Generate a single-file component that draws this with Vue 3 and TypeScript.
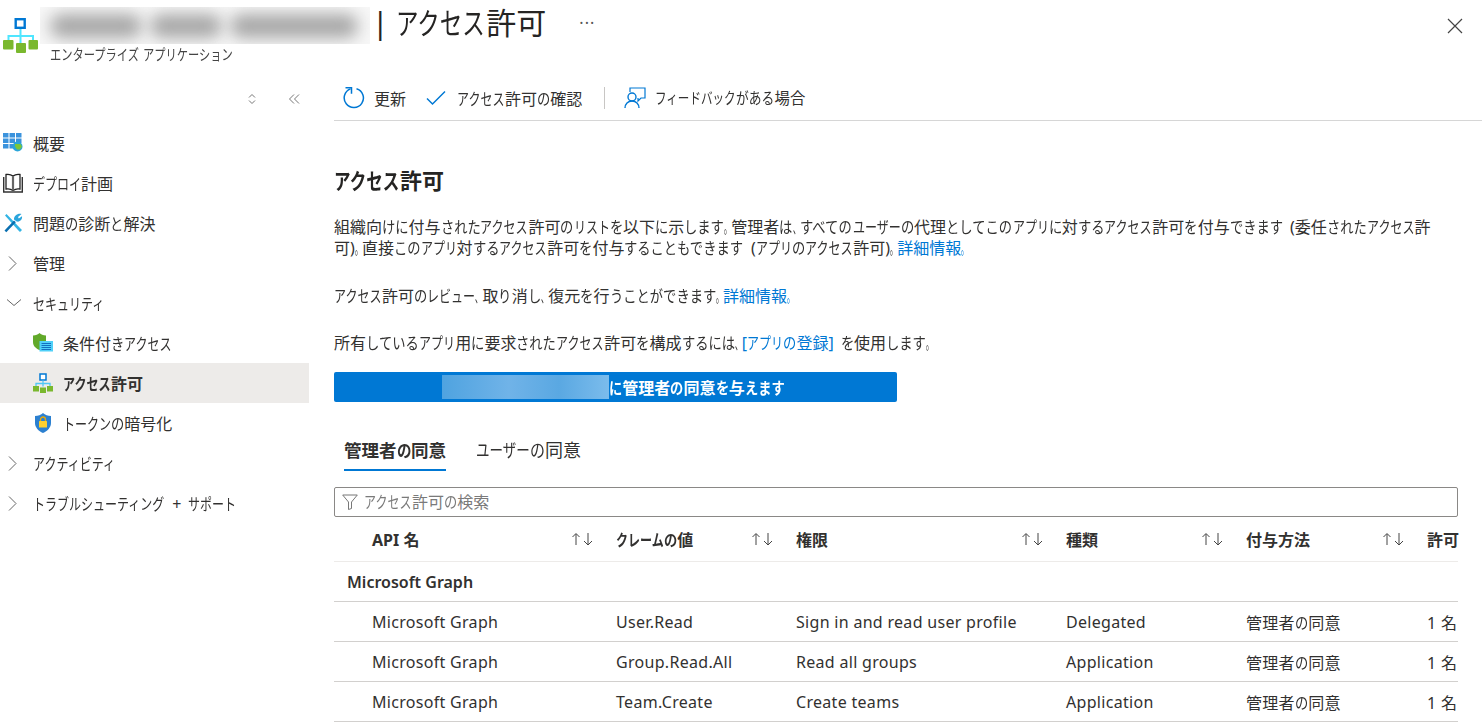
<script setup lang="ts">
import { h } from 'vue'
import type { FunctionalComponent } from 'vue'

const kindOf = (ch: string): string | null => {
  if (/[\u30a0-\u30ff]/.test(ch)) return 'kata'
  if (/[\u3041-\u309f]/.test(ch)) return 'hira'
  if (/[\u3001\u3002]/.test(ch)) return 'punct'
  return null
}
const advance: Record<string, number> = { kata: 0.75, hira: 0.83, punct: 0.45 }
const T: FunctionalComponent<{ s: string }> = (props) =>
  (props.s.match(/[\u30a0-\u30ff]+|[\u3041-\u309f]+|[\u3001\u3002]+|[^\u3001\u3002\u3041-\u30ff]+/g) ?? []).map((run) => {
    const kind = kindOf(run[0])
    return kind
      ? h('span', { class: kind, style: { width: `${run.length * advance[kind]}em` } }, run)
      : run
  })
T.props = ['s']

interface NavItem { label: string; icon: string; child?: boolean; active?: boolean }
const nav: NavItem[] = [
  { label: '概要', icon: 'grid' },
  { label: 'デプロイ計画', icon: 'book' },
  { label: '問題の診断と解決', icon: 'wrench' },
  { label: '管理', icon: 'right' },
  { label: 'セキュリティ', icon: 'down' },
  { label: '条件付きアクセス', icon: 'policy', child: true },
  { label: 'アクセス許可', icon: 'tree', child: true, active: true },
  { label: 'トークンの暗号化', icon: 'shield', child: true },
  { label: 'アクティビティ', icon: 'right' },
  { label: 'トラブルシューティング + サポート', icon: 'right' },
]
const columns = ['API 名', 'クレームの値', '権限', '種類', '付与方法']
const rows = [
  ['Microsoft Graph', 'User.Read', 'Sign in and read user profile', 'Delegated', '管理者の同意', '1 名'],
  ['Microsoft Graph', 'Group.Read.All', 'Read all groups', 'Application', '管理者の同意', '1 名'],
  ['Microsoft Graph', 'Team.Create', 'Create teams', 'Application', '管理者の同意', '1 名'],
]
</script>

<template>
  <div class="page">
    <header class="top">
      <svg class="logo" viewBox="0 0 36 38" width="36" height="38">
        <rect x="13.700" y="3.200" width="9" height="8.600" fill="#fff" stroke="#0078d4" stroke-width="2.400" />
        <path d="M18.500 13v15M6.500 24v-4h24.500v4" fill="none" stroke="#50e6ff" stroke-width="2" />
        <rect x="1" y="24" width="10.500" height="9.500" rx="1" fill="#7ab82e" />
        <rect x="14" y="27" width="10" height="10" rx="1" fill="#7ab82e" />
        <rect x="26.500" y="24" width="9.500" height="9.500" rx="1" fill="#7ab82e" />
      </svg>
      <div class="titles">
        <div class="title-row">
          <div class="blur-name" aria-hidden="true">
            <span class="blob b1"></span><span class="blob b2"></span><span class="blob b3"></span>
          </div>
          <h1>| <T s="アクセス許可" /></h1>
          <span class="more">···</span>
        </div>
        <div class="subtitle"><T s="エンタープライズ アプリケーション" /></div>
      </div>
      <svg class="close" viewBox="0 0 16 16" width="16" height="16">
        <path d="M1 1l14 14M15 1L1 15" stroke="#444" stroke-width="1.200" fill="none" />
      </svg>
    </header>

    <div class="body">
      <aside class="side">
        <div class="side-tools">
          <svg viewBox="0 0 10 12" width="10" height="12">
            <path d="M2 4.500L5 1.500l3 3M2 7.500l3 3 3-3" fill="none" stroke="#777" stroke-width="1" />
          </svg>
          <svg viewBox="0 0 12 12" width="12" height="12">
            <path d="M6 1.500L1.500 6 6 10.500M11 1.500L6.500 6 11 10.500" fill="none" stroke="#777" stroke-width="1" />
          </svg>
        </div>
        <nav>
          <div v-for="item in nav" :key="item.label" class="nav-item" :class="{ child: item.child, active: item.active }">
            <span class="nav-icon">
              <svg v-if="item.icon === 'grid'" viewBox="0 0 20 20" width="20" height="20">
                <path d="M0 0h5.500v4.500H0zM6.500 0H12v4.500H6.500zM13 0h5.500v4.500H13zM0 5.500h5.500V10H0zM6.500 5.500H12V10H6.500zM13 5.500h5.500V10H13zM0 11h5.500v4.500H0zM6.500 11H12v4.500H6.500z" fill="#3b93dd" />
                <circle cx="14.500" cy="13.500" r="5" fill="#2aa5d9" />
                <path d="M12 11h5.500l1.500 2.500-2 3h-3l-2-3z" fill="#7cc63a" />
              </svg>
              <svg v-else-if="item.icon === 'book'" viewBox="0 0 20 20" width="20" height="20">
                <path d="M3 1.500c2.500-.5 5 0 7 1.500 2-1.500 4.500-2 7-1.500V16c-2.500-.5-5 0-7 1.500-2-1.500-4.500-2-7-1.500z" fill="#fff" stroke="#222" stroke-width="1.300" />
                <path d="M10 3v14.500" stroke="#666" stroke-width="2.200" />
                <path d="M.7 4v15h18.600V4" fill="none" stroke="#333" stroke-width="1.400" />
              </svg>
              <svg v-else-if="item.icon === 'wrench'" viewBox="0 0 20 20" width="20" height="20">
                <path d="M3.500 1L2 2.500l12.500 14 2.500 2.500 2-2-2.500-2.500z" fill="#32b4e4" />
                <path d="M1.500 17.500L11 7.500l1.800 1.800-9.500 10z" fill="#0a6fb0" />
                <path d="M18.500 1l-3.500 3 .8 1.500 3.200-2.200c.6 3-2 6-5.300 5.200L11 6.500C10.800 3 14.500 0 18.500 1z" fill="#2aa5dc" />
              </svg>
              <svg v-else-if="item.icon === 'right'" class="chev" viewBox="0 0 15 15" width="15" height="15">
                <path d="M2 .5l7 7-7 7" fill="none" stroke="#666" stroke-width="1" />
              </svg>
              <svg v-else-if="item.icon === 'down'" class="chev" viewBox="0 0 15 15" width="15" height="15">
                <path d="M0 3.500l7 6 7-6" fill="none" stroke="#666" stroke-width="1" />
              </svg>
              <svg v-else-if="item.icon === 'policy'" viewBox="0 0 20 20" width="20" height="20">
                <path d="M0 2.500C3 2.500 5 1.500 6.500 0 8 1.500 10 2.500 13 2.500V9c0 4-3 6.500-6.500 8C3 15.500 0 13 0 9z" fill="#62a92a" />
                <rect x="6.500" y="8" width="13.500" height="10.500" fill="#50d0f8" />
                <path d="M8.500 10.500h9.500M8.500 12.500h9.500M8.500 14.500h9.500M8.500 16.500h9.500" stroke="#1470c0" stroke-width="1" />
              </svg>
              <svg v-else-if="item.icon === 'tree'" viewBox="0 0 20 20" width="20" height="20">
                <rect x="7" y="1" width="6" height="6" fill="#fff" stroke="#0078d4" stroke-width="1.500" />
                <path d="M10 7.500v6M3 13v-2.500h14V13" fill="none" stroke="#50c8f4" stroke-width="1.300" />
                <rect x="0" y="13" width="6" height="5.500" fill="#7ab82e" />
                <rect x="7" y="14.500" width="6" height="5.500" fill="#7ab82e" />
                <rect x="14" y="13" width="6" height="5.500" fill="#7ab82e" />
              </svg>
              <svg v-else-if="item.icon === 'shield'" viewBox="0 0 20 20" width="20" height="20">
                <path d="M2 3c3 0 6-1 8-3 2 2 5 3 8 3v7c0 4.500-3.500 8-8 10-4.500-2-8-5.500-8-10z" fill="#2c80d0" />
                <rect x="6" y="8" width="8" height="6.500" rx=".5" fill="#ffd02f" />
                <path d="M7.500 8V6.500a2.500 2.500 0 015 0V8" fill="none" stroke="#e8a80c" stroke-width="1.300" />
              </svg>
            </span>
            <span class="nav-label"><T :s="item.label" /></span>
          </div>
        </nav>
      </aside>

      <main class="main">
        <div class="toolbar">
          <button class="tool refresh">
            <svg viewBox="0 0 22 24" width="22" height="24">
              <path d="M13.500 2.700a9.600 9.600 0 11-6 .2" fill="none" stroke="#0078d4" stroke-width="1.500" />
              <path d="M2.500 1.700h6v6" fill="none" stroke="#0078d4" stroke-width="1.500" />
            </svg>
            <span><T s="更新" /></span>
          </button>
          <button class="tool check">
            <svg viewBox="0 0 20 16" width="20" height="16">
              <path d="M1 8.500l5.500 5.500L19 1.500" fill="none" stroke="#0078d4" stroke-width="1.500" />
            </svg>
            <span><T s="アクセス許可の確認" /></span>
          </button>
          <span class="divider"></span>
          <button class="tool fb">
            <svg viewBox="0 0 22 22" width="22" height="22">
              <circle cx="8" cy="10" r="4" fill="none" stroke="#0078d4" stroke-width="1.400" />
              <path d="M1 21c0-4 3-7 7-7s7 3 7 7" fill="none" stroke="#0078d4" stroke-width="1.400" />
              <path d="M6 5V1h15v10h-4l-3 3v-3" fill="none" stroke="#0078d4" stroke-width="1.200" />
            </svg>
            <span class="fb-text"><T s="フィードバックがある場合" /></span>
          </button>
        </div>

        <section class="content">
          <h2><T s="アクセス許可" /></h2>
          <p class="p1"><T s="組織向けに付与されたアクセス許可のリストを以下に示します。管理者は、すべてのユーザーの代理としてこのアプリに対するアクセス許可を付与できます (委任されたアクセス許" /><br /><T s="可)。直接このアプリ対するアクセス許可を付与することもできます (アプリのアクセス許可)。" /><a><T s="詳細情報。" /></a></p>
          <p class="p2"><T s="アクセス許可のレビュー、取り消し、復元を行うことができます。" /><a><T s="詳細情報。" /></a></p>
          <p class="p3"><T s="所有しているアプリ用に要求されたアクセス許可を構成するには、" /><a><T s="[アプリの登録]" /></a> <T s="を使用します。" /></p>
          <button class="consent">
            <span class="consent-blur" aria-hidden="true"></span>
            <span><T s="に管理者の同意を与えます" /></span>
          </button>

          <div class="tabs">
            <span class="tab on"><T s="管理者の同意" /></span>
            <span class="tab"><T s="ユーザーの同意" /></span>
          </div>

          <div class="search">
            <svg viewBox="0 0 16 16" width="16" height="16">
              <path d="M.7 1h14.600L9.500 8v6.500l-3 1V8z" fill="none" stroke="#777" stroke-width="1" />
            </svg>
            <span class="search-text"><T s="アクセス許可の検索" /></span>
          </div>

          <div class="table">
            <div class="tr head">
              <div v-for="c in columns" :key="c" class="th">
                <span><T :s="c" /></span>
                <svg viewBox="0 0 22 14" width="22" height="14">
                  <path d="M5 13V2M1.500 5L5 1.500 8.500 5M17 1v11.500M13 9l4 4 4-4" fill="none" stroke="#444" stroke-width="1" />
                </svg>
              </div>
              <div class="th last"><T s="許可" /></div>
            </div>
            <div class="group">Microsoft Graph</div>
            <div v-for="(r, i) in rows" :key="i" class="tr row">
              <div v-for="(v, j) in r" :key="j" class="td"><T :s="v" /></div>
            </div>
          </div>
        </section>
      </main>
    </div>
  </div>
</template>

<style scoped>
.page {
  width: 1482px;
  height: 722px;
  overflow: hidden;
  background: #fff;
  color: #323130;
  font-family: "Noto Sans", "Noto Sans CJK JP", sans-serif;
  font-size: 16px;
}
.page :deep(.kata),
.page :deep(.hira),
.page :deep(.punct) {
  display: inline-block;
  white-space: nowrap;
  transform-origin: 0 50%;
}
.page :deep(.kata) { transform: scaleX(0.75); }
.page :deep(.hira) { transform: scaleX(0.83); }
.page :deep(.punct) { transform: scaleX(0.45); }
.top { height: 80px; display: flex; align-items: flex-start; position: relative; }
.logo { margin: 16px 0 0 2px; flex: none; }
.titles { margin-left: 12px; flex: 1; }
.title-row { display: flex; align-items: center; height: 45px; padding-top: 4px; }
.blur-name {
  width: 330px; height: 37px; margin: -2px 0 0 -10px; display: flex; align-items: center; gap: 8px;
  padding: 0 10px; box-sizing: border-box; overflow: hidden; background: #f7f7f7; flex: none;
}
.blob { display: block; height: 24px; background: #a8a8a8; border-radius: 12px; filter: blur(8px); flex: none; }
.b1 { width: 92px; } .b2 { width: 72px; } .b3 { width: 128px; }
h1 { margin: -8px 0 0 2px; font-size: 30px; font-weight: 400; line-height: 40px; white-space: nowrap; color: #252423; }
.more { margin: -8px 0 0 33px; font-size: 16px; color: #555; letter-spacing: 1px; }
.subtitle { font-size: 15px; line-height: 18px; margin-top: -4px; color: #444; word-spacing: -1px; white-space: nowrap; }
.close { position: absolute; top: 18px; right: 19px; }

.body { display: flex; height: 642px; }
.side { width: 309px; flex: none; }
.side-tools { height: 43px; display: flex; align-items: center; justify-content: flex-end; gap: 31px; padding: 0 9px 5px 0; box-sizing: border-box; }
.nav-item { height: 40px; display: flex; align-items: center; padding-left: 3px; white-space: nowrap; word-spacing: 3px; }
.nav-item.child { padding-left: 33px; }
.nav-item.active { background: #edebe9; font-weight: 700; }
.nav-icon { width: 30px; display: flex; align-items: center; flex: none; }
.chev { margin-left: 4px; }
.main { flex: 1; margin-left: 25px; min-width: 0; }
.toolbar { height: 41px; box-sizing: border-box; border-bottom: 1px solid #d6d6d6; display: flex; align-items: center; padding: 0 0 5px 9px; }
.tool { display: flex; align-items: center; background: none; border: 0; padding: 0; font: inherit; color: #323130; white-space: nowrap; }
.refresh { gap: 9px; }
.check { gap: 11px; margin-left: 20px; }
.divider { width: 1px; height: 22px; background: #c8c6c4; margin: 0 19px 0 22px; }
.fb { gap: 9px; }
.fb-text { font-size: 15.4px; }
.content { width: 1124px; }
h2 { margin: 43px 0 0; font-size: 22px; line-height: 32px; font-weight: 700; color: #252423; }
p { margin: 0; font-size: 16px; line-height: 21px; white-space: nowrap; word-spacing: 3px; }
.p1 { margin-top: 21px; }
.p2 { margin-top: 27px; }
.p3 { margin-top: 26px; }
a { color: #0078d4; }
.consent {
  width: 563px; height: 30px; margin-top: 18px; background: #0078d4; border: 0; border-radius: 2px; padding: 0 0 0 108px;
  display: flex; align-items: center; color: #fff; font: inherit; font-weight: 700; font-size: 16px;
}
.consent-blur { width: 167px; height: 24px; background: linear-gradient(90deg, #4fa3e0, #70b3e8 40%, #5aa8e2 70%, #7bbcec); flex: none; }
.tabs { display: flex; gap: 30px; margin-top: 32px; padding-left: 10px; height: 37px; }
.tab { height: 37px; line-height: 32px; font-size: 18px; white-space: nowrap; box-sizing: border-box; }
.tab.on { font-size: 17.5px; font-weight: 700; border-bottom: 2px solid #0078d4; }
.search {
  height: 30px; margin-top: 16px; box-sizing: border-box; border: 1px solid #8a8886; border-radius: 2px;
  display: flex; align-items: center; gap: 6px; padding-left: 7px; color: #7a7a7a;
}
.search-text { margin-top: -2px; }
.tr { display: grid; grid-template-columns: 282px 180px 270px 180px 181px 31px; }
.head { height: 45px; border-bottom: 1px solid #edebe9; align-items: center; font-weight: 700; box-sizing: border-box; }
.th { display: flex; align-items: center; justify-content: space-between; padding-right: 23px; white-space: nowrap; }
.th:first-child, .td:first-child { padding-left: 38px; }
.th.last { padding-right: 0; }
.group { height: 40px; line-height: 40px; padding-left: 13px; border-bottom: 1px solid #d2d0ce; box-sizing: border-box; font-weight: 600; }
.row { height: 40px; align-items: center; border-bottom: 1px solid #d2d0ce; box-sizing: border-box; }
.td { white-space: nowrap; letter-spacing: 0.3px; }
</style>
